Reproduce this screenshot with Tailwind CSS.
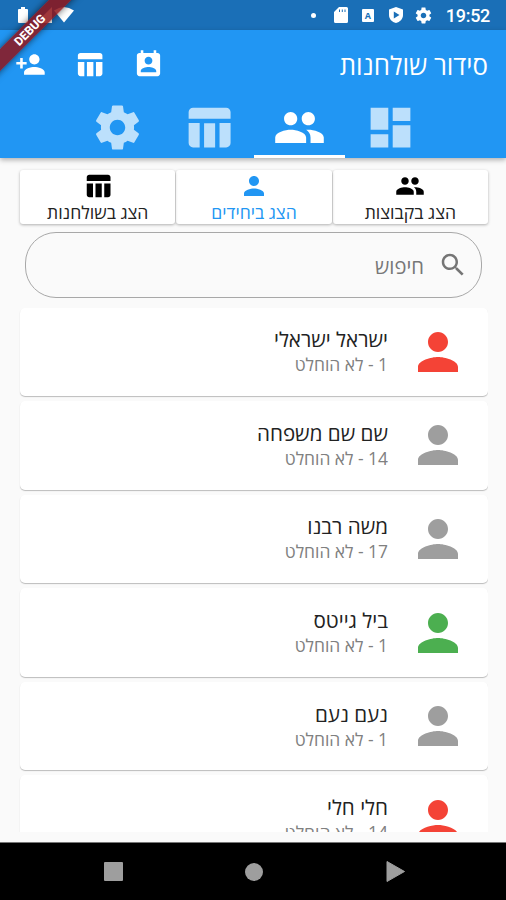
<!DOCTYPE html>
<html lang="he" dir="rtl">

<head>
    <meta charset="UTF-8">
    <meta name="viewport" content="width=device-width, initial-scale=1.0">
    <title>סידור שולחנות</title>
    <script src="https://cdn.jsdelivr.net/npm/@tailwindcss/browser@4"></script>
</head>

<body class="bg-[#fafafa] font-['Open_Sans',sans-serif]">
    <!-- Icons -->
    <svg class="hidden">
        <symbol id="settings" viewBox="0 0 24 24"><path d="M19.43 12.98c.04-.32.07-.64.07-.98s-.03-.66-.07-.98l2.11-1.65c.19-.15.24-.42.12-.64l-2-3.46c-.12-.22-.39-.3-.61-.22l-2.49 1c-.52-.4-1.08-.73-1.69-.98l-.38-2.65C14.46 2.18 14.25 2 14 2h-4c-.25 0-.46.18-.49.42l-.38 2.65c-.61.25-1.17.59-1.69.98l-2.49-1c-.23-.09-.49 0-.61.22l-2 3.46c-.13.22-.07.49.12.64l2.11 1.65c-.04.32-.07.65-.07.98s.03.66.07.98l-2.11 1.65c-.19.15-.24.42-.12.64l2 3.46c.12.22.39.3.61.22l2.49-1c.52.4 1.08.73 1.69.98l.38 2.65c.03.24.24.42.49.42h4c.25 0 .46-.18.49-.42l.38-2.65c.61-.25 1.17-.59 1.69-.98l2.49 1c.23.09.49 0 .61-.22l2-3.46c.12-.22.07-.49-.12-.64l-2.11-1.65zM12 15.5c-1.93 0-3.5-1.57-3.5-3.5s1.57-3.5 3.5-3.5 3.5 1.57 3.5 3.5-1.57 3.5-3.5 3.5z"/></symbol>
        <symbol id="table" viewBox="0 0 24 24"><path d="M10 10.02h5V21h-5zM17 21h3c1.1 0 2-.9 2-2v-9h-5v11zm3-18H5c-1.1 0-2 .9-2 2v3h19V5c0-1.1-.9-2-2-2zM3 19c0 1.1.9 2 2 2h3V10H3v9z"/></symbol>
        <symbol id="people" viewBox="0 0 24 24"><path d="M16 11c1.66 0 2.99-1.34 2.99-3S17.66 5 16 5c-1.66 0-3 1.34-3 3s1.34 3 3 3zm-8 0c1.66 0 2.99-1.34 2.99-3S9.66 5 8 5C6.34 5 5 6.34 5 8s1.34 3 3 3zm0 2c-2.33 0-7 1.17-7 3.5V19h14v-2.5c0-2.33-4.67-3.5-7-3.5zm8 0c-.29 0-.62.02-.97.05 1.16.84 1.97 1.97 1.97 3.45V19h6v-2.5c0-2.33-4.67-3.5-7-3.5z"/></symbol>
        <symbol id="dashboard" viewBox="0 0 24 24"><path d="M3 13h8V3H3v10zm0 8h8v-6H3v6zm10 0h8V11h-8v10zm0-18v6h8V3h-8z"/></symbol>
        <symbol id="person" viewBox="0 0 24 24"><path d="M12 12c2.21 0 4-1.79 4-4s-1.79-4-4-4-4 1.79-4 4 1.79 4 4 4zm0 2c-2.67 0-8 1.34-8 4v2h16v-2c0-2.66-5.33-4-8-4z"/></symbol>
        <symbol id="person-add" viewBox="0 0 24 24"><path d="M15 12c2.21 0 4-1.79 4-4s-1.79-4-4-4-4 1.79-4 4 1.79 4 4 4zm-9-2V7H4v3H1v2h3v3h2v-3h3v-2H6zm9 4c-2.67 0-8 1.34-8 4v2h16v-2c0-2.66-5.33-4-8-4z"/></symbol>
        <symbol id="contact-calendar" viewBox="0 0 24 24"><path d="M19 3h-1V1h-2v2H8V1H6v2H5c-1.11 0-2 .9-2 2v14c0 1.1.89 2 2 2h14c1.1 0 2-.9 2-2V5c0-1.1-.9-2-2-2zm-7 3c1.66 0 3 1.34 3 3s-1.34 3-3 3-3-1.34-3-3 1.34-3 3-3zm6 12H6v-1c0-2 4-3.1 6-3.1s6 1.1 6 3.1v1z"/></symbol>
        <symbol id="search" viewBox="0 0 24 24"><path d="M15.5 14h-.79l-.28-.27C15.41 12.59 16 11.11 16 9.5 16 5.91 13.09 3 9.5 3S3 5.91 3 9.5 5.91 16 9.5 16c1.61 0 3.09-.59 4.23-1.57l.27.28v.79l5 4.99L20.49 19l-4.99-5zm-6 0C7.01 14 5 11.99 5 9.5S7.01 5 9.5 5 14 7.01 14 9.5 11.99 14 9.5 14z"/></symbol>
    </svg>

    <div class="relative w-[506px] h-[900px] overflow-hidden flex flex-col">
        <!-- Status bar -->
        <div dir="ltr" class="h-[30px] shrink-0 bg-[#1a6fb7] flex items-center justify-between pl-[18px] pr-4 text-white fill-white">
            <div class="flex items-center">
                <svg class="w-[10px] h-4" viewBox="0 0 10 16"><path d="M3 0h4v2h2a1 1 0 0 1 1 1v12a1 1 0 0 1-1 1H1a1 1 0 0 1-1-1V3a1 1 0 0 1 1-1h2z"/></svg>
                <svg class="w-4 h-4 ml-2" viewBox="0 0 16 16"><path d="M16 0v16H0z"/></svg>
                <svg class="w-5 h-4 ml-[2px]" viewBox="0 0 20 16"><path d="M0 3.5Q10-3.5 20 3.5L10 15.5z"/></svg>
            </div>
            <div class="flex items-center">
                <div class="size-[5px] rounded-full bg-white"></div>
                <svg class="w-[14px] h-4 ml-[18px]" viewBox="0 0 14 16"><path fill-rule="evenodd" d="M5 0h7.500A1.500 1.500 0 0 1 14 1.500v13a1.500 1.500 0 0 1-1.500 1.500h-11A1.500 1.500 0 0 1 0 14.500V5zM5 2.500v2.500h1v-2.500zM7.800 2.500v2.500h1v-2.500zM10.500 2.500v2.500h1v-2.500z"/></svg>
                <div class="w-3 h-[13px] ml-3.5 rounded-[1px] bg-white text-[#1a6fb7] text-[9px] font-bold leading-[13px] text-center">A</div>
                <svg class="w-[14px] h-4 ml-[15px]" viewBox="0 0 14 16"><path fill-rule="evenodd" d="M7 0l7 2.500V8c0 4-3 7-7 8-4-1-7-4-7-8V2.500zM4.800 4.500v7L10.500 8z"/></svg>
                <svg class="size-[19px] ml-[11px]"><use href="#settings"/></svg>
                <span class="ml-[13px] font-[Roboto,sans-serif] font-medium text-[18px] leading-[30px] tracking-[-0.3px] relative top-px">19:52</span>
            </div>
        </div>

        <!-- App bar -->
        <header class="relative z-10 h-[128px] shrink-0 bg-[#2196f3] text-white fill-white shadow-[0_2px_5px_rgba(0,0,0,0.3)]">
            <div class="h-[69px] flex items-center justify-between pr-[18px] pl-[15px]">
                <h1 class="text-[25.800px] leading-8 pt-px">סידור שולחנות</h1>
                <div class="flex items-center gap-7">
                    <svg class="size-[31px]"><use href="#contact-calendar"/></svg>
                    <svg class="size-[31px]"><use href="#table"/></svg>
                    <svg class="size-[31px]"><use href="#person-add"/></svg>
                </div>
            </div>
            <nav class="h-[59px] flex justify-center pl-[2px]">
                <div class="w-[91px] flex justify-center pt-0.5 fill-white/70"><svg class="size-[53px]"><use href="#dashboard"/></svg></div>
                <div class="w-[91px] flex justify-center pt-0.5 border-b-[3px] border-white"><svg class="size-[53px] shrink-0"><use href="#people"/></svg></div>
                <div class="w-[91px] flex justify-center pt-0.5 fill-white/70"><svg class="size-[53px]"><use href="#table"/></svg></div>
                <div class="w-[91px] flex justify-center pt-0.5 fill-white/70"><svg class="size-[53px]"><use href="#settings"/></svg></div>
            </nav>
        </header>

        <main class="flex-1 min-h-0 flex flex-col px-[18px] pt-3">
            <!-- View mode -->
            <div class="h-[54px] shrink-0 ml-0.5 flex gap-px text-[17.600px] leading-5 text-[#222] fill-black">
                <div class="flex-1 bg-white rounded-[3px] shadow-[0_1px_3px_rgba(0,0,0,0.3)] flex flex-col items-center pt-px">
                    <svg class="size-[30px]"><use href="#people"/></svg>
                    <span class="mt-px">הצג בקבוצות</span>
                </div>
                <div class="flex-1 bg-white rounded-[3px] shadow-[0_1px_3px_rgba(0,0,0,0.3)] flex flex-col items-center pt-px text-[#2196f3] fill-[#2196f3]">
                    <svg class="size-[30px]"><use href="#person"/></svg>
                    <span class="mt-px">הצג ביחידים</span>
                </div>
                <div class="flex-1 bg-white rounded-[3px] shadow-[0_1px_3px_rgba(0,0,0,0.3)] flex flex-col items-center pt-px">
                    <svg class="size-[30px]"><use href="#table"/></svg>
                    <span class="mt-px">הצג בשולחנות</span>
                </div>
            </div>

            <!-- Search -->
            <div class="mt-2 mr-1.5 ml-[7px] h-[66px] shrink-0 rounded-[31px] border border-[#a8a8a8] flex items-center pr-[13px] text-[#777]">
                <svg class="size-[30px] fill-[#757575]"><use href="#search"/></svg>
                <span class="mr-[14px] text-[20.200px] leading-7 mt-px">חיפוש</span>
            </div>

            <!-- People -->
            <div id="list" class="mt-[9px] h-[525px] shrink-0 overflow-hidden pl-0.5 pt-[0.500px]"></div>
        </main>

        <!-- Navigation bar -->
        <div dir="ltr" class="h-[58px] shrink-0 bg-black border-t border-[#777] fill-[#9e9e9e]">
            <div class="h-full flex items-center justify-between pl-[104px] pr-[101px]">
                <div class="size-[19px] rounded-[1px] bg-[#9e9e9e]"></div>
                <div class="size-[18px] mr-[2px] rounded-full bg-[#9e9e9e]"></div>
                <svg class="w-[19px] h-[21px]" viewBox="0 0 19 21"><path d="M1 .5L18.500 10.500 1 20.500z" stroke="#9e9e9e" stroke-linejoin="round"/></svg>
            </div>
        </div>

        <!-- Debug ribbon -->
        <div dir="ltr" class="absolute z-20 left-[-30px] top-[22px] w-[120px] h-4 -rotate-45 bg-[#8f1419]/85 shadow-[0_0_7px_rgba(0,0,0,0.6)] text-white text-[12px] leading-4 font-extrabold text-center font-[Roboto,sans-serif]">DEBUG</div>
    </div>

    <script>
        const people = [
            { name: 'ישראל ישראלי', count: 1, color: 'fill-[#f44336]' },
            { name: 'שם שם משפחה', count: 14, color: 'fill-[#9e9e9e]' },
            { name: 'משה רבנו', count: 17, color: 'fill-[#9e9e9e]' },
            { name: 'ביל גייטס', count: 1, color: 'fill-[#4caf50]' },
            { name: 'נעם נעם', count: 1, color: 'fill-[#9e9e9e]' },
            { name: 'חלי חלי', count: 14, color: 'fill-[#f44336]' }
        ];

        document.getElementById('list').innerHTML = people.map(person => `
            <div class="h-[88.600px] mb-[5px] bg-white rounded-[5px] shadow-[0_1px_1px_rgba(0,0,0,0.25)] flex items-center pr-5">
                <svg class="size-[60px] ${person.color}"><use href="#person"/></svg>
                <div class="mr-5">
                    <div class="text-[20.600px] leading-[26px] text-[#222]">${person.name}</div>
                    <div class="text-[17.400px] leading-[25px] text-[#808080]">${person.count} - לא הוחלט</div>
                </div>
            </div>`).join('');
    </script>
</body>

</html>
